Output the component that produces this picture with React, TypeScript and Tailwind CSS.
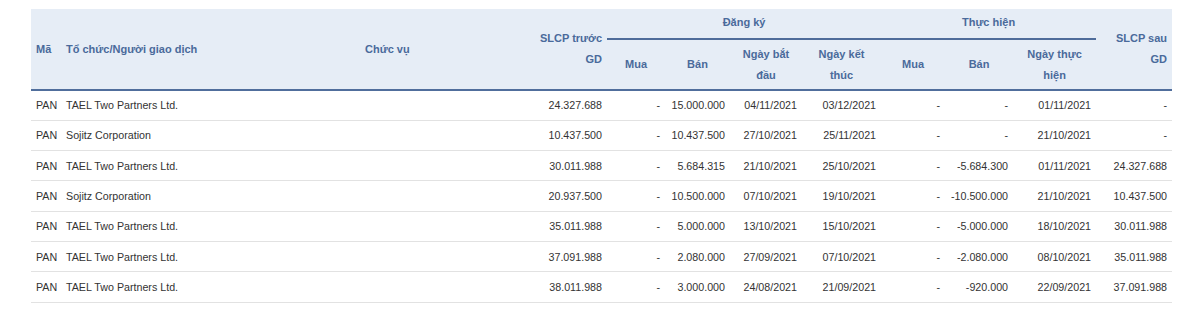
import React from "react";

const rows = [
  ["PAN", "TAEL Two Partners Ltd.", "", "24.327.688", "-", "15.000.000", "04/11/2021", "03/12/2021", "-", "-", "01/11/2021", "-"],
  ["PAN", "Sojitz Corporation", "", "10.437.500", "-", "10.437.500", "27/10/2021", "25/11/2021", "-", "-", "21/10/2021", "-"],
  ["PAN", "TAEL Two Partners Ltd.", "", "30.011.988", "-", "5.684.315", "21/10/2021", "25/10/2021", "-", "-5.684.300", "01/11/2021", "24.327.688"],
  ["PAN", "Sojitz Corporation", "", "20.937.500", "-", "10.500.000", "07/10/2021", "19/10/2021", "-", "-10.500.000", "21/10/2021", "10.437.500"],
  ["PAN", "TAEL Two Partners Ltd.", "", "35.011.988", "-", "5.000.000", "13/10/2021", "15/10/2021", "-", "-5.000.000", "18/10/2021", "30.011.988"],
  ["PAN", "TAEL Two Partners Ltd.", "", "37.091.988", "-", "2.080.000", "27/09/2021", "07/10/2021", "-", "-2.080.000", "08/10/2021", "35.011.988"],
  ["PAN", "TAEL Two Partners Ltd.", "", "38.011.988", "-", "3.000.000", "24/08/2021", "21/09/2021", "-", "-920.000", "22/09/2021", "37.091.988"],
];

const widths = [30, 299, 167, 80, 58, 65, 72, 79, 64, 68, 83, 76];

export default function App() {
  return (
    <div className="w-[1200px] h-[309px] bg-white pt-[9px] pl-[31px]" style={{ fontFamily: '"Liberation Sans", Arial, sans-serif' }}>
      <table className="w-[1141px] table-fixed border-collapse">
        <colgroup>
          {widths.map((w, i) => (
            <col key={i} style={{ width: w }} />
          ))}
        </colgroup>
        <thead className="bg-[#e6edf6] text-[#4a6a9b] font-bold text-[11px] leading-[21px]">
          <tr>
            <th rowSpan={2} className="text-left px-[5px] align-middle border-b-2 border-[#506e9c]">Mã</th>
            <th rowSpan={2} className="text-left px-[5px] align-middle border-b-2 border-[#506e9c]">Tổ chức/Người giao dịch</th>
            <th rowSpan={2} className="text-left px-[5px] align-middle border-b-2 border-[#506e9c]">Chức vụ</th>
            <th rowSpan={2} className="text-right px-[5px] pl-[12px] align-middle border-b-2 border-[#506e9c]">SLCP trước GD</th>
            <th colSpan={4} className="text-center h-[30px] pt-[3px] align-top border-b-2 border-[#4f6c9a]">Đăng ký</th>
            <th colSpan={3} className="text-center h-[30px] pt-[3px] align-top border-b-2 border-[#4f6c9a]">Thực hiện</th>
            <th rowSpan={2} className="text-right px-[5px] pl-[14px] align-middle border-b-2 border-[#506e9c]">SLCP sau GD</th>
          </tr>
          <tr className="h-[51px]">
            <th className="text-center px-[5px] border-b-2 border-[#506e9c]">Mua</th>
            <th className="text-center px-[5px] border-b-2 border-[#506e9c]">Bán</th>
            <th className="text-center px-[10px] border-b-2 border-[#506e9c]">Ngày bắt đầu</th>
            <th className="text-center px-[12px] border-b-2 border-[#506e9c]">Ngày kết thúc</th>
            <th className="text-center px-[5px] border-b-2 border-[#506e9c]">Mua</th>
            <th className="text-center px-[5px] border-b-2 border-[#506e9c]">Bán</th>
            <th className="text-center px-[10px] border-b-2 border-[#506e9c]">Ngày thực hiện</th>
          </tr>
        </thead>
        <tbody className="text-[#333333] text-[10.7px]">
          {rows.map((r, i) => (
            <tr key={i} className="h-[30.33px] border-b border-[#e2e2e2]">
              {r.map((c, j) => (
                <td key={j} className={`px-[5px] whitespace-nowrap ${j < 3 ? "text-left" : "text-right"}`}>
                  {c}
                </td>
              ))}
            </tr>
          ))}
        </tbody>
      </table>
    </div>
  );
}
